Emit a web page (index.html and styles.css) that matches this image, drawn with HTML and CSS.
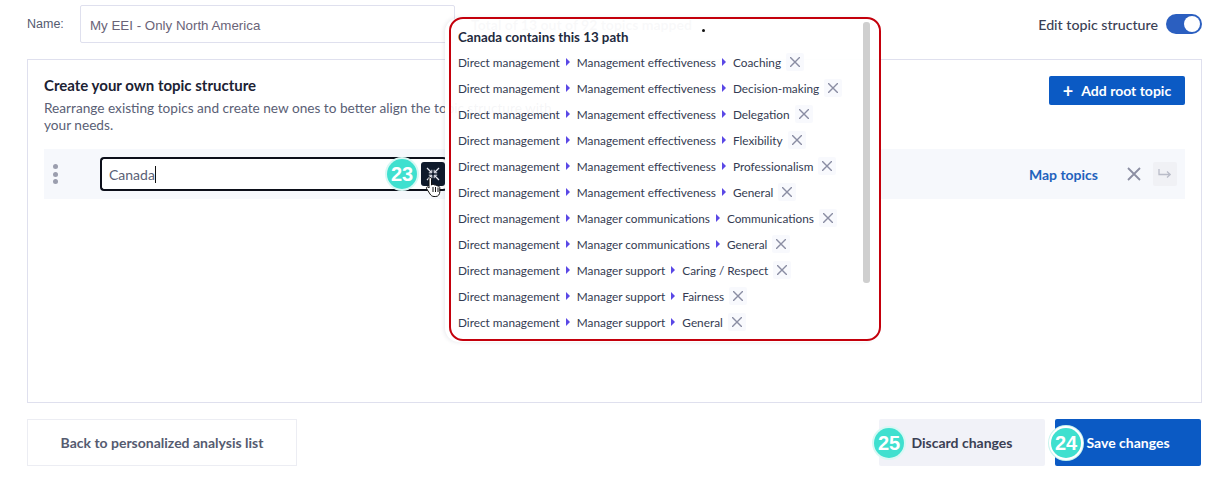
FILE: index.html
```html
<!DOCTYPE html>
<html lang="en">
<head>
<meta charset="utf-8">
<title>Topic structure</title>
<link rel="stylesheet" href="styles.css">
</head>
<body>
<main class="page">
  <header class="top">
    <label class="name-label">Name:</label>
    <div class="name-input">My EEI - Only North America</div>
    <div class="total">Total of 13 out of 92 topics mapped</div>
    <div class="edit">
      <span>Edit topic structure</span>
      <span class="toggle"><span class="knob"></span></span>
    </div>
  </header>

  <section class="card">
    <div class="card-head">
      <div class="intro">
        <h2>Create your own topic structure</h2>
        <p>Rearrange existing topics and create new ones to better align the topic structure with your needs.</p>
      </div>
      <button class="add-btn"><span class="plus">+</span>Add root topic</button>
    </div>
    <div class="topic-row">
      <span class="dots"><i></i><i></i><i></i></span>
      <div class="topic-input">
        <span class="topic-text">Canada</span><span class="caret"></span>
        <span class="badge badge-23">23</span>
        <span class="map-icon">
          <svg width="14" height="14" viewBox="0 0 14 14" fill="none" stroke="#e4e6ee" stroke-width="1.3"><path d="M1 1l4.5 4.5M13 1L8.500 5.500M1 13l4.500-4.500M13 13L8.500 8.500"/><path d="M5.800 2.800v3h-3M8.200 2.800v3h3M5.800 11.200v-3h-3M8.200 11.200v-3h3" stroke-width="1"/></svg>
        </span>
        <svg class="hand" width="18" height="22" viewBox="0 0 18 22"><path d="M5 1.500c1 0 1.500.7 1.500 1.700V9l1-.5c.7-.3 1.400 0 1.700.5.700-.4 1.500-.2 1.800.5.800-.3 1.500 0 1.800.7.800-.2 2 .2 2 1.500v4c0 2.500-1.500 4.800-4 4.800H9c-1.800 0-3-1-4-2.500L1.500 12.500c-.6-1 .8-2.200 1.800-1.300l.7.800V3.200C4 2.200 4.300 1.500 5 1.500z" fill="#fff" stroke="#111" stroke-width="1"/><path d="M8 11v5M10.500 11v5M13 11.500V16" stroke="#111" stroke-width="1"/></svg>
      </div>
      <a class="map-link">Map topics</a>
      <svg class="row-x" width="14" height="14" viewBox="0 0 14 14" stroke="#8c8fa3" stroke-width="1.800" fill="none"><path d="M1 1l12 12M13 1L1 13"/></svg>
      <span class="row-arrow">
        <svg width="14" height="10" viewBox="0 0 14 10" fill="none" stroke="#b9bcc8" stroke-width="1.300"><path d="M1 0v5.500h11M9 2.500l3.200 3-3.200 3"/></svg>
      </span>
    </div>
  </section>

  <footer class="bottom">
    <button class="back-btn">Back to personalized analysis list</button>
    <div class="actions">
      <button class="discard-btn"><span class="badge badge-25">25</span>Discard changes</button>
      <button class="save-btn"><span class="badge badge-24">24</span>Save changes</button>
    </div>
  </footer>
</main>

<aside class="popover">
  <h3>Canada contains this 13 path</h3>
  <ul class="paths">
    <li><span>Direct management</span><b></b><span>Management effectiveness</span><b></b><span>Coaching</span><em><svg viewBox="0 0 10 10"><path d="M0 0l10 10M10 0L0 10"/></svg></em></li>
    <li><span>Direct management</span><b></b><span>Management effectiveness</span><b></b><span>Decision-making</span><em><svg viewBox="0 0 10 10"><path d="M0 0l10 10M10 0L0 10"/></svg></em></li>
    <li><span>Direct management</span><b></b><span>Management effectiveness</span><b></b><span>Delegation</span><em><svg viewBox="0 0 10 10"><path d="M0 0l10 10M10 0L0 10"/></svg></em></li>
    <li><span>Direct management</span><b></b><span>Management effectiveness</span><b></b><span>Flexibility</span><em><svg viewBox="0 0 10 10"><path d="M0 0l10 10M10 0L0 10"/></svg></em></li>
    <li><span>Direct management</span><b></b><span>Management effectiveness</span><b></b><span>Professionalism</span><em><svg viewBox="0 0 10 10"><path d="M0 0l10 10M10 0L0 10"/></svg></em></li>
    <li><span>Direct management</span><b></b><span>Management effectiveness</span><b></b><span>General</span><em><svg viewBox="0 0 10 10"><path d="M0 0l10 10M10 0L0 10"/></svg></em></li>
    <li><span>Direct management</span><b></b><span>Manager communications</span><b></b><span>Communications</span><em><svg viewBox="0 0 10 10"><path d="M0 0l10 10M10 0L0 10"/></svg></em></li>
    <li><span>Direct management</span><b></b><span>Manager communications</span><b></b><span>General</span><em><svg viewBox="0 0 10 10"><path d="M0 0l10 10M10 0L0 10"/></svg></em></li>
    <li><span>Direct management</span><b></b><span>Manager support</span><b></b><span>Caring / Respect</span><em><svg viewBox="0 0 10 10"><path d="M0 0l10 10M10 0L0 10"/></svg></em></li>
    <li><span>Direct management</span><b></b><span>Manager support</span><b></b><span>Fairness</span><em><svg viewBox="0 0 10 10"><path d="M0 0l10 10M10 0L0 10"/></svg></em></li>
    <li><span>Direct management</span><b></b><span>Manager support</span><b></b><span>General</span><em><svg viewBox="0 0 10 10"><path d="M0 0l10 10M10 0L0 10"/></svg></em></li>
  </ul>
  <span class="scrollbar"></span>
  <span class="speck"></span>
</aside>
</body>
</html>
```
FILE: styles.css
```css
* { box-sizing: border-box; }
html, body { margin: 0; height: 100%; }
body { background: #fff; font-family: Lato, "Open Sans", sans-serif; color: #2a3147; overflow: hidden; position: relative; }
.page { padding: 5px 28px 0 27px; }

.top { display: flex; align-items: center; height: 38px; position: relative; }
.name-label { font-family: "Liberation Sans", Arial, sans-serif; font-size: 12.500px; color: #555b70; width: 53px; }
.name-input { width: 375px; height: 38px; border: 1px solid #dfe0ee; border-radius: 2px; padding: 0 9px; line-height: 39px; font-family: "Liberation Sans", Arial, sans-serif; font-size: 13.333px; color: #6a6478; }
.total { margin-left: 16px; font-size: 14px; font-weight: 700; color: #8a8d9c; }
.edit { margin-left: auto; display: flex; align-items: center; gap: 8px; font-size: 14.200px; font-weight: 500; color: #3a4054; }
.toggle { width: 36px; height: 20px; border-radius: 10px; background: #2b5fc0; position: relative; display: block; }
.knob { position: absolute; right: 2px; top: 2px; width: 16px; height: 16px; border-radius: 50%; background: #fff; }

.card { margin-top: 16px; border: 1px solid #dfe0ee; height: 344px; padding: 16px 16px 0; }
.card-head { display: flex; justify-content: space-between; align-items: flex-start; }
.intro { width: 520px; }
.intro h2 { margin: -1px 0 0; font-size: 15px; line-height: 20px; font-weight: 700; color: #1c2233; }
.intro p { margin: 5px 0 0; font-size: 13.650px; line-height: 17px; color: #5a6075; }
.add-btn { width: 136px; height: 29px; border: 0; border-radius: 2px; background: #0b5ac4; color: #fff; font: 700 14px Lato, sans-serif; display: flex; align-items: center; justify-content: center; gap: 8px; }
.plus { font-size: 18px; font-weight: 700; line-height: 18px; }

.topic-row { margin-top: 15px; height: 50px; background: #f6f8fc; display: flex; align-items: center; padding-right: 8px; }
.dots { width: 56px; padding-left: 9px; display: flex; flex-direction: column; gap: 2.500px; }
.dots i { display: block; width: 5px; height: 5px; border-radius: 50%; background: #9b9eae; }
.topic-input { position: relative; width: 347px; height: 34px; border: 2px solid #0c0f1a; border-right-color: #e4e5ec; border-radius: 4px; background: #fff; display: flex; align-items: center; padding-left: 7px; font-size: 14px; color: #5a6075; }
.caret { width: 1px; height: 17px; background: #111; }
.map-icon { position: absolute; left: 319px; top: 3px; width: 24px; height: 24px; border-radius: 3px; background: #0f1a2b; display: flex; align-items: center; justify-content: center; }
.hand { position: absolute; left: 323px; top: 17px; }
.map-link { margin-left: auto; font-size: 14px; font-weight: 700; color: #1f62bd; }
.row-x { margin-left: 29px; }
.row-arrow { margin-left: 12px; width: 24px; height: 24px; background: #f0f1f5; border-radius: 2px; display: flex; align-items: center; justify-content: center; }

.badge { position: absolute; width: 30px; height: 30px; border-radius: 50%; background: #3fe0cf; color: #fff; font-family: "Liberation Sans", Arial, sans-serif; font-size: 20px; font-weight: 700; line-height: 30px; text-align: center; box-shadow: 0 0 0 2px #d8f8f4; }
.badge-23 { left: 285px; top: 0; z-index: 2; }
.badge-25 { left: -5px; top: 9px; }
.badge-24 { left: -4px; top: 9px; box-shadow: 0 0 0 2px #fff, 0 0 0 3px #c8f4ee; }

.bottom { margin-top: 16px; display: flex; justify-content: space-between; align-items: flex-start; }
.bottom button { height: 47px; font: 700 14px Lato, sans-serif; position: relative; padding: 0; }
.bottom .back-btn { width: 270px; background: #fff; border: 1px solid #ecedf3; color: #555b70; }
.actions { display: flex; gap: 10px; margin-right: 1px; }
.discard-btn { width: 166px; background: #f1f2f8; border: 0; border-radius: 2px; color: #3a4054; }
.save-btn { width: 146px; background: #0b5ac4; border: 0; border-radius: 2px; color: #fff; }

.popover { position: absolute; left: 449px; top: 17px; width: 432px; height: 324px; border: 2px solid #c4000c; border-radius: 14px; background: rgba(255, 255, 255, .94); padding: 6px 0 0 7px; box-shadow: -4px 1px 0 #fff, -5px 1px 4px rgba(30, 40, 70, .10); }
.popover h3 { margin: 0; font-size: 13.300px; line-height: 24px; font-weight: 700; color: #232a3d; }
.paths { list-style: none; margin: 0; padding: 0; }
.paths li { display: flex; align-items: center; height: 26px; font-size: 11.800px; color: #343b52; }
.paths b { width: 0; height: 0; border-left: 4px solid #5a48e6; border-top: 4px solid transparent; border-bottom: 4px solid transparent; margin: 0 7px 0 6px; }
.paths em { width: 18px; height: 18px; margin-left: 5px; background: #f8f9fd; display: flex; align-items: center; justify-content: center; border-radius: 2px; }
.paths svg { width: 10px; height: 10px; stroke: #8a8da3; stroke-width: 1.400; fill: none; }
.scrollbar { position: absolute; right: 9px; top: 3px; width: 7px; height: 261px; background: #cfcfcf; border-radius: 3px; }
.speck { position: absolute; left: 251px; top: 10px; width: 3px; height: 3px; border-radius: 50%; background: #111; }
```
